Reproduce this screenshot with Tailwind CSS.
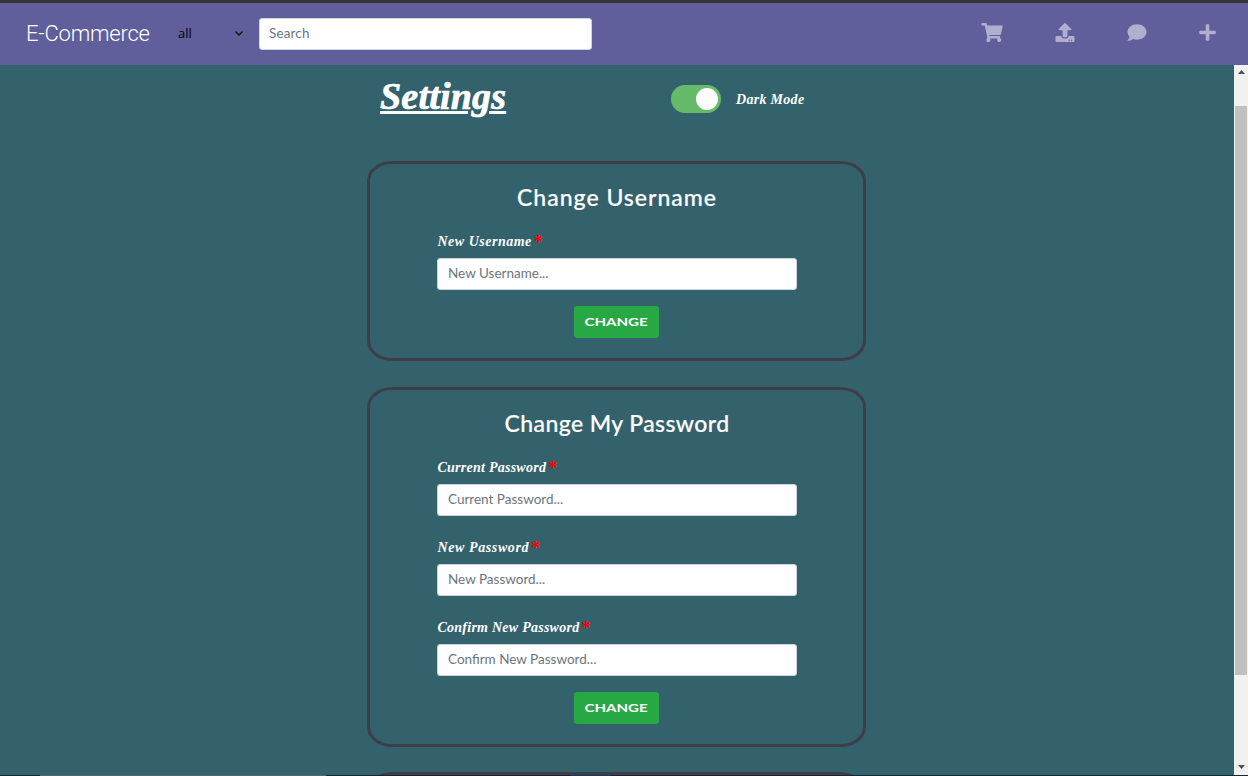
<!DOCTYPE html>
<html lang="en">
<head>
<meta charset="utf-8">
<title>E-Commerce – Settings</title>
<script src="https://cdn.jsdelivr.net/npm/@tailwindcss/browser@4"></script>
</head>
<body class="flex h-[776px] w-[1248px] flex-col overflow-hidden bg-[#33626d] font-['Lato',sans-serif]">
<div class="h-[3px] shrink-0 bg-[#343538]"></div>
<header class="flex h-[62px] shrink-0 items-center bg-[#605f9b]">
  <a class="ml-[26px] w-[151px] whitespace-nowrap font-['Roboto',sans-serif] text-[22px] font-light leading-[30px] tracking-[-0.2px] text-white"><span>E-Commerce</span></a>
  <div class="flex w-[67px] items-center justify-between pb-0.5 text-[13px] leading-5 text-black font-['Open_Sans',sans-serif]">
    <span class="ml-px">all</span>
    <svg class="h-2 w-2.5" viewBox="0 0 10 8" fill="none" stroke="#111" stroke-width="1.4"><path d="M1.5 2.5 5 6l3.500-3.500"/></svg>
  </div>
  <input class="ml-[15px] mb-px h-8 w-[333px] rounded-[3px] border border-[#ced4da] bg-white px-[9px] pb-px text-[13.5px] tracking-[0.15px] placeholder:text-[#6c757d]" placeholder="Search">
  <nav class="ml-auto mr-8 flex items-center pb-1 text-[#b0afcf]">
    <svg class="h-[19px] w-[22px]" viewBox="0 0 576 512" fill="currentColor"><path d="M528.12 301.319l47.273-208C578.806 78.301 567.391 64 551.990 64H159.208l-9.166-44.810C147.758 8.021 137.930 0 126.529 0H24C10.745 0 0 10.745 0 24v16c0 13.255 10.745 24 24 24h69.883l70.248 343.435C147.325 417.100 136 435.222 136 456c0 30.928 25.072 56 56 56s56-25.072 56-56c0-15.674-6.447-29.835-16.824-40h209.647C430.447 426.165 424 440.326 424 456c0 30.928 25.072 56 56 56s56-25.072 56-56c0-22.172-12.888-41.332-31.579-50.405l5.517-24.276c3.413-15.018-8.002-29.319-23.403-29.319H218.117l-6.545-32h293.145c11.206 0 20.920-7.754 23.403-18.681z"/></svg>
    <svg class="ml-[52px] h-[19px] w-5" viewBox="0 0 512 512" fill="currentColor"><path d="M296 384h-80c-13.300 0-24-10.700-24-24V192h-87.700c-17.800 0-26.700-21.500-14.100-34.100L242.300 5.700c7.500-7.500 19.800-7.500 27.300 0l152.200 152.200c12.600 12.600 3.700 34.100-14.100 34.100H320v168c0 13.300-10.700 24-24 24zm216-8v112c0 13.300-10.700 24-24 24H24c-13.300 0-24-10.700-24-24V376c0-13.300 10.700-24 24-24h136v8c0 30.900 25.100 56 56 56h80c30.900 0 56-25.100 56-56v-8h136c13.300 0 24 10.700 24 24zm-124 88c0-11-9-20-20-20s-20 9-20 20 9 20 20 20 20-9 20-20zm64 0c0-11-9-20-20-20s-20 9-20 20 9 20 20 20 20-9 20-20z"/></svg>
    <svg class="ml-[52px] h-[19px] w-5" viewBox="0 0 512 512" fill="currentColor"><path d="M256 32C114.600 32 0 125.100 0 240c0 49.600 21.400 95 57 130.700C44.500 421.100 2.700 466 2.200 466.500c-2.200 2.300-2.800 5.700-1.500 8.700S4.800 480 8 480c66.300 0 116-31.800 140.600-51.400 32.700 12.300 69 19.400 107.400 19.400 141.400 0 256-93.100 256-208S397.400 32 256 32z"/></svg>
    <svg class="ml-[52px] h-[19px] w-[17px]" viewBox="0 0 448 512" fill="currentColor"><path d="M416 208H272V64c0-17.670-14.330-32-32-32h-32c-17.670 0-32 14.330-32 32v144H32c-17.670 0-32 14.330-32 32v32c0 17.670 14.330 32 32 32h144v144c0 17.670 14.330 32 32 32h32c17.670 0 32-14.330 32-32V304h144c17.670 0 32-14.330 32-32v-32c0-17.670-14.330-32-32-32z"/></svg>
  </nav>
</header>

<div class="flex h-[710px] shrink-0">
  <main class="flex flex-1 flex-col items-center overflow-hidden pr-px">
    <div class="flex h-[96px] w-[499px] shrink-0 items-start font-['Liberation_Serif',serif] font-bold italic text-white">
      <h1 class="ml-[13px] mt-2 w-[291px] whitespace-nowrap text-[38px] leading-[46px] tracking-[0.2px] underline decoration-[3px] underline-offset-[2px] [-webkit-text-stroke:0.7px_white]">Settings</h1>
      <div class="mt-5 flex h-7 w-[50px] items-center justify-end rounded-full bg-[#66bb6a] pr-[3px]"><div class="size-[22px] rounded-full bg-white"></div></div>
      <span class="ml-[15px] mt-6 whitespace-nowrap text-[14px] leading-[22px] tracking-[0.3px]">Dark Mode</span>
    </div>

    <section class="flex h-[200px] w-[499px] shrink-0 flex-col items-center rounded-[25px/20px] border-[3px] border-[#3e3e48]">
      <h2 class="ml-px mt-[17px] whitespace-nowrap text-[23px] font-medium leading-[32px] tracking-[1px] text-white [-webkit-text-stroke:0.2px_white]">Change Username</h2>
      <form class="mt-[15px] flex w-[360px] flex-col items-center">
        <label class="flex h-[30px] self-start whitespace-nowrap pl-px font-['Liberation_Serif',serif] text-[14px] font-bold italic leading-[28px] tracking-[0.5px] text-white">New Username<span class="ml-[2px] text-[18px] not-italic tracking-normal text-[#f00]">*</span></label>
        <input class="h-8 w-[360px] rounded-[3px] border border-[#ced4da] bg-white px-[10.5px] pb-[3px] text-[13.5px] placeholder:text-[#6c757d]" placeholder="New Username...">
        <button type="button" class="mt-4 flex h-8 w-[85px] items-center justify-center rounded-[3px] bg-[#28a745] text-[11px] font-bold text-white"><span class="scale-x-[1.37]">CHANGE</span></button>
      </form>
    </section>

    <section class="mt-[26px] flex h-[360px] w-[499px] shrink-0 flex-col items-center rounded-[25px/20px] border-[3px] border-[#3e3e48]">
      <h2 class="ml-px mt-[17px] whitespace-nowrap text-[23px] font-medium leading-[32px] tracking-[0.4px] text-white [-webkit-text-stroke:0.2px_white]">Change My Password</h2>
      <form class="mt-[15px] flex w-[360px] flex-col items-center">
        <label class="flex h-[30px] self-start whitespace-nowrap pl-px font-['Liberation_Serif',serif] text-[14px] font-bold italic leading-[28px] tracking-[0.25px] text-white">Current Password<span class="ml-[2px] text-[18px] not-italic tracking-normal text-[#f00]">*</span></label>
        <input class="h-8 w-[360px] rounded-[3px] border border-[#ced4da] bg-white px-[10.5px] pb-[3px] text-[13.5px] placeholder:text-[#6c757d]" placeholder="Current Password...">
        <label class="mt-[18px] flex h-[30px] self-start whitespace-nowrap pl-px font-['Liberation_Serif',serif] text-[14px] font-bold italic leading-[28px] tracking-[0.6px] text-white">New Password<span class="ml-[2px] text-[18px] not-italic tracking-normal text-[#f00]">*</span></label>
        <input class="h-8 w-[360px] rounded-[3px] border border-[#ced4da] bg-white px-[10.5px] pb-[3px] text-[13.5px] placeholder:text-[#6c757d]" placeholder="New Password...">
        <label class="mt-[18px] flex h-[30px] self-start whitespace-nowrap pl-px font-['Liberation_Serif',serif] text-[14px] font-bold italic leading-[28px] tracking-[0.25px] text-white">Confirm New Password<span class="ml-[2px] text-[18px] not-italic tracking-normal text-[#f00]">*</span></label>
        <input class="h-8 w-[360px] rounded-[3px] border border-[#ced4da] bg-white px-[10.5px] pb-[3px] text-[13.5px] placeholder:text-[#6c757d]" placeholder="Confirm New Password...">
        <button type="button" class="mt-4 flex h-8 w-[85px] items-center justify-center rounded-[3px] bg-[#28a745] text-[11px] font-bold text-white"><span class="scale-x-[1.37]">CHANGE</span></button>
      </form>
    </section>
    <section class="mt-[25px] h-[200px] w-[499px] shrink-0 rounded-[25px/20px] border-[3px] border-[#3e3e48]"></section>
  </main>
  <aside class="flex w-[14px] flex-col items-center bg-[#f1f1f1]">
    <svg class="mt-[5px] h-1 w-[7px]" viewBox="0 0 7 4" fill="#505050"><path d="M0 4 3.500 0 7 4z"/></svg>
    <div class="mt-[32px] h-[569px] w-3 bg-[#c1c1c1]"></div>
    <svg class="mt-auto mb-[6px] h-1 w-[7px]" viewBox="0 0 7 4" fill="#505050"><path d="M0 0h7L3.500 4z"/></svg>
  </aside>
</div>
<footer class="flex h-px shrink-0 bg-[#182831]"><div class="ml-10 w-[286px] bg-[#526970]"></div><div class="ml-[245px] w-10 bg-[#0b3c63]"></div></footer>
</body>
</html>
